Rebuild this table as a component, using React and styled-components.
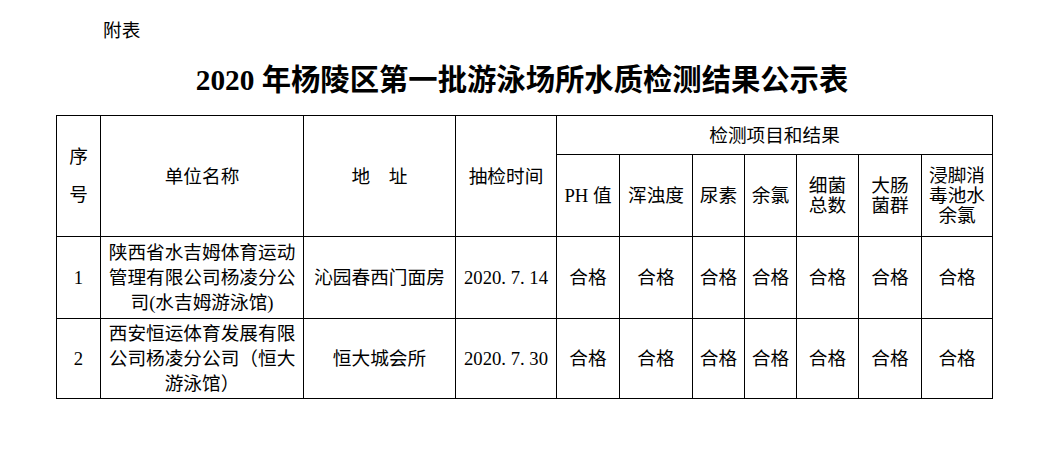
import React from 'react';
import styled, { createGlobalStyle } from 'styled-components';

const GlobalStyle = createGlobalStyle`
  html, body {
    margin: 0;
    padding: 0;
    background: #fff;
  }
  body {
    font-family: "Liberation Serif", "Noto Sans CJK SC", serif;
    color: #000;
  }
`;

const Page = styled.div`
  width: 1044px;
  height: 472px;
  padding-top: 18px;
  box-sizing: border-box;
  background: #fff;
`;

const Note = styled.div`
  padding-left: 103px;
  font-size: 18.67px;
  line-height: 25px;
`;

const Title = styled.h1`
  margin: 17px 0 0;
  text-align: center;
  font-size: 29.33px;
  line-height: 40px;
  font-weight: 700;
`;

const Table = styled.table`
  margin: 15px 0 0 56px;
  width: 937px;
  border-collapse: collapse;
  table-layout: fixed;
  font-size: 18.67px;
`;

const Cell = styled.td`
  border: 1px solid #000;
  padding: 0 2px;
  text-align: center;
  vertical-align: middle;
  white-space: nowrap;
  line-height: ${p => p.$lh || 25}px;
`;

const Row = styled.tr`
  height: ${p => p.$h}px;
`;

const columns = [44, 203, 152, 101, 63, 73, 52, 52, 62, 63, 71];

const items = [
  'PH 值',
  '浑浊度',
  '尿素',
  '余氯',
  <>细菌<br />总数</>,
  <>大肠<br />菌群</>,
  <>浸脚消<br />毒池水<br />余氯</>,
];

const records = [
  {
    id: 1,
    name: <>陕西省水吉姆体育运动<br />管理有限公司杨凌分公<br />司(水吉姆游泳馆)</>,
    address: '沁园春西门面房',
    date: '2020. 7. 14',
  },
  {
    id: 2,
    name: <>西安恒运体育发展有限<br />公司杨凌分公司（恒大<br />游泳馆）</>,
    address: '恒大城会所',
    date: '2020. 7. 30',
  },
];

export default function App() {
  return (
    <Page>
      <GlobalStyle />
      <Note>附表</Note>
      <Title>2020 年杨陵区第一批游泳场所水质检测结果公示表</Title>
      <Table>
        <colgroup>
          {columns.map((w, i) => <col key={i} style={{ width: w }} />)}
        </colgroup>
        <tbody>
          <Row $h={39}>
            <Cell rowSpan={2} $lh={38}>序<br />号</Cell>
            <Cell rowSpan={2}>单位名称</Cell>
            <Cell rowSpan={2}>地　址</Cell>
            <Cell rowSpan={2}>抽检时间</Cell>
            <Cell colSpan={7}>检测项目和结果</Cell>
          </Row>
          <Row $h={82}>
            {items.map((item, i) => (
              <Cell key={i} $lh={20}>{item}</Cell>
            ))}
          </Row>
          {records.map((r, idx) => (
            <Row key={r.id} $h={idx === 0 ? 82 : 80}>
              <Cell>{r.id}</Cell>
              <Cell>{r.name}</Cell>
              <Cell>{r.address}</Cell>
              <Cell>{r.date}</Cell>
              {items.map((_, i) => <Cell key={i}>合格</Cell>)}
            </Row>
          ))}
        </tbody>
      </Table>
    </Page>
  );
}
